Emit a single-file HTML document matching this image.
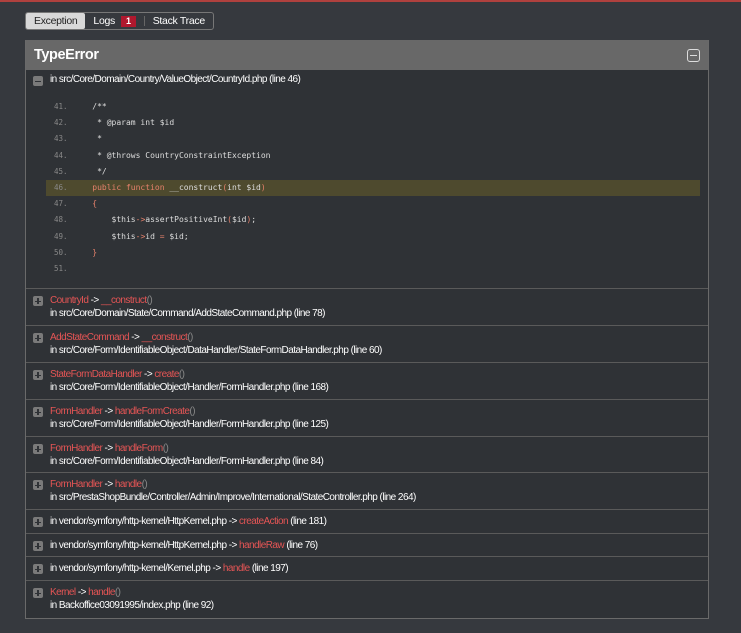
<!DOCTYPE html>
<html><head><meta charset="utf-8"><style>
*{margin:0;padding:0;box-sizing:border-box}
body{width:741px;height:633px;background:#36393e;font-family:"Liberation Sans",Arial,sans-serif;color:#fff;overflow:hidden;position:relative}
.top{position:absolute;left:0;top:0;width:741px;height:2px;background:#b0413e}
.tabs{position:absolute;left:25px;top:12px;height:18px;border:1px solid #777;border-radius:3px;display:flex;font-size:10.5px;letter-spacing:-.3px}
.tab{padding:0 8px;line-height:16px;color:#fff}
.tab.act{background:#d8d8d8;color:#222;border-radius:2px}
.badge{display:inline-block;background:#b0182e;color:#fff;font-weight:bold;font-size:9px;padding:0 5px;line-height:11px;margin-left:6px}
.sep{width:1px;background:#666;margin:3px 0}
.panel{position:absolute;left:25px;top:40px;width:684px;height:579px;border:1px solid #6a6a6a;border-top:none;background:#2f3236}
.hdr{height:30px;background:#686868;font-weight:bold;font-size:14.5px;padding:0 8px;line-height:30px;letter-spacing:-.4px;position:relative}
.hdr .mi{position:absolute;right:8px;top:9px;width:13px;height:13px;border:1.3px solid #ddd;border-radius:3px}
.hdr .mi:after{content:"";position:absolute;left:2px;right:2px;top:4.5px;height:1.3px;background:#ddd}
.row{position:absolute;left:0;right:0;border-top:1px solid #5a5a5a;font-size:10px;letter-spacing:-.55px;padding-left:24px}
.ic{position:absolute;left:7px;width:10px;height:10px;background:#7a7a7a;border-radius:2px}
.ic:before{content:"";position:absolute;left:2px;right:2px;top:4.5px;height:1.2px;background:#2f3236}
.ic.p:after{content:"";position:absolute;top:2px;bottom:2px;left:4.4px;width:1.2px;background:#2f3236}
.r{color:#e55555}.g{color:#888}
.code{position:absolute;left:20px;top:59px;width:654px;font-family:"DejaVu Sans Mono","Liberation Mono",monospace;font-size:8px;letter-spacing:0}
.ln{height:16.2px;line-height:16.2px;position:relative;padding-left:27px;color:#ddd;white-space:pre}
.ln .n{position:absolute;left:8px;color:#888;font-size:7.5px}
.ln.hl{background:#4e4a2e}
.k{color:#e5816b}.o{color:#e5816b}
.m{margin-top:6px}
</style></head><body>
<div class="top"></div>
<div class="tabs"><div class="tab act">Exception</div><div class="tab">Logs<span class="badge">1</span></div><div class="sep"></div><div class="tab">Stack Trace</div></div>
<div class="panel">
<div class="hdr">TypeError<span class="mi"></span></div>
<div class="row" style="top:30px;height:219px;border-top:none"><span class="ic" style="top:6px"></span><div style="margin-top:4px">in src/Core/Domain/Country/ValueObject/CountryId.php (line 46)</div></div>
<div class="code">
<div class="ln"><span class="n">41.</span>    /**</div>
<div class="ln"><span class="n">42.</span>     * @param int $id</div>
<div class="ln"><span class="n">43.</span>     *</div>
<div class="ln"><span class="n">44.</span>     * @throws CountryConstraintException</div>
<div class="ln"><span class="n">45.</span>     */</div>
<div class="ln hl"><span class="n">46.</span>    <span class="k">public function</span> __construct<span class="o">(</span>int $id<span class="o">)</span></div>
<div class="ln"><span class="n">47.</span>    <span class="o">{</span></div>
<div class="ln"><span class="n">48.</span>        $this<span class="o">-&gt;</span>assertPositiveInt<span class="o">(</span>$id<span class="o">)</span>;</div>
<div class="ln"><span class="n">49.</span>        $this<span class="o">-&gt;</span>id <span class="o">=</span> $id;</div>
<div class="ln"><span class="n">50.</span>    <span class="o">}</span></div>
<div class="ln"><span class="n">51.</span></div>
</div>
<div class="row" style="top:248px;height:37px"><span class="ic p" style="top:7px"></span><div class="m"><span class="r">CountryId</span> -&gt; <span class="r">__construct</span><span class="g">()</span></div><div style="margin-top:2px">in src/Core/Domain/State/Command/AddStateCommand.php (line 78)</div></div>
<div class="row" style="top:285px;height:37px"><span class="ic p" style="top:7px"></span><div class="m"><span class="r">AddStateCommand</span> -&gt; <span class="r">__construct</span><span class="g">()</span></div><div style="margin-top:2px">in src/Core/Form/IdentifiableObject/DataHandler/StateFormDataHandler.php (line 60)</div></div>
<div class="row" style="top:322px;height:37px"><span class="ic p" style="top:7px"></span><div class="m"><span class="r">StateFormDataHandler</span> -&gt; <span class="r">create</span><span class="g">()</span></div><div style="margin-top:2px">in src/Core/Form/IdentifiableObject/Handler/FormHandler.php (line 168)</div></div>
<div class="row" style="top:359px;height:37px"><span class="ic p" style="top:7px"></span><div class="m"><span class="r">FormHandler</span> -&gt; <span class="r">handleFormCreate</span><span class="g">()</span></div><div style="margin-top:2px">in src/Core/Form/IdentifiableObject/Handler/FormHandler.php (line 125)</div></div>
<div class="row" style="top:396px;height:36px"><span class="ic p" style="top:7px"></span><div class="m"><span class="r">FormHandler</span> -&gt; <span class="r">handleForm</span><span class="g">()</span></div><div style="margin-top:2px">in src/Core/Form/IdentifiableObject/Handler/FormHandler.php (line 84)</div></div>
<div class="row" style="top:432px;height:37px"><span class="ic p" style="top:7px"></span><div class="m"><span class="r">FormHandler</span> -&gt; <span class="r">handle</span><span class="g">()</span></div><div style="margin-top:2px">in src/PrestaShopBundle/Controller/Admin/Improve/International/StateController.php (line 264)</div></div>
<div class="row" style="top:469px;height:24px"><span class="ic p" style="top:7px"></span><div class="m">in vendor/symfony/http-kernel/HttpKernel.php -&gt; <span class="r">createAction</span> (line 181)</div></div>
<div class="row" style="top:493px;height:23px"><span class="ic p" style="top:7px"></span><div class="m">in vendor/symfony/http-kernel/HttpKernel.php -&gt; <span class="r">handleRaw</span> (line 76)</div></div>
<div class="row" style="top:516px;height:24px"><span class="ic p" style="top:7px"></span><div class="m">in vendor/symfony/http-kernel/Kernel.php -&gt; <span class="r">handle</span> (line 197)</div></div>
<div class="row" style="top:540px;height:38px"><span class="ic p" style="top:7px"></span><div class="m"><span class="r">Kernel</span> -&gt; <span class="r">handle</span><span class="g">()</span></div><div style="margin-top:2px">in Backoffice03091995/index.php (line 92)</div></div>
</div>
</body></html>
